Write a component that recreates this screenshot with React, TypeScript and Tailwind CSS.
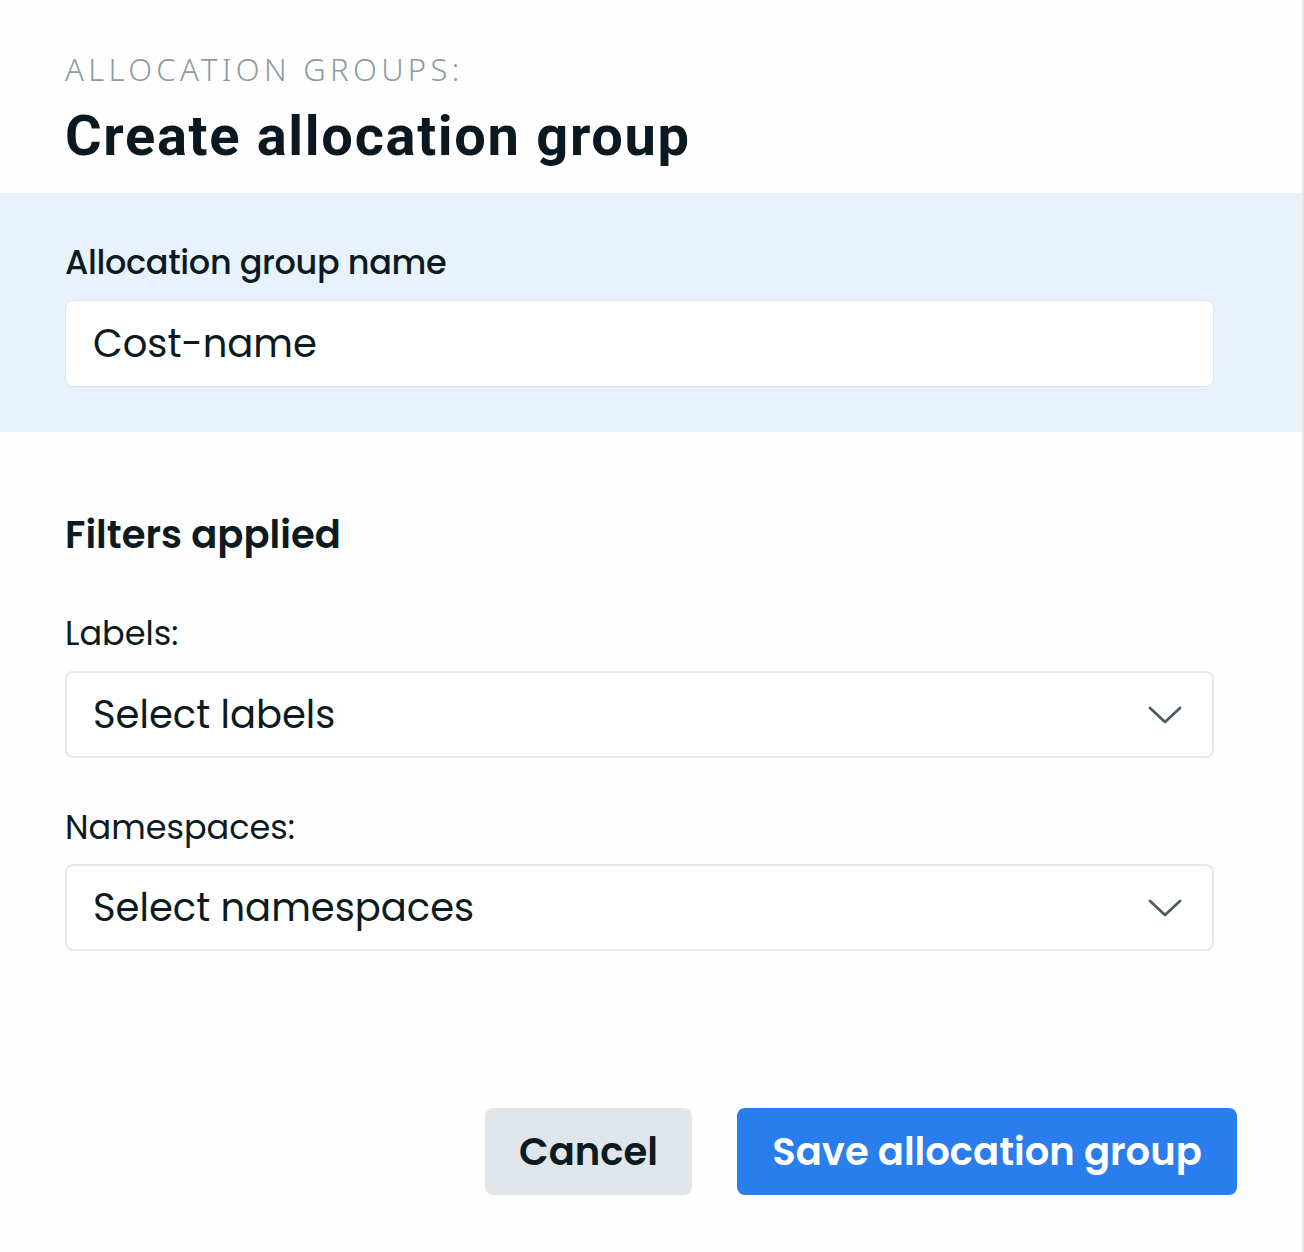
import React from "react";

const Chevron = () => (
  <svg width="34" height="20" viewBox="0 0 34 20" fill="none">
    <path d="M2 3 L17 17 L32 3" stroke="#4b5d63" strokeWidth="2.8" strokeLinecap="round" strokeLinejoin="round" />
  </svg>
);

export default function App() {
  const body = { fontFamily: "Poppins, 'Noto Sans', Inter, sans-serif" };
  return (
    <div className="w-[1304px] min-h-[1252px] bg-[#fefefe] border-r-[2px] border-[#e6e6e6] flex flex-col text-[#0c1a21]" style={body}>
      <div className="pl-[65px] pt-[50px] h-[193px]">
        <div className="text-[31px] leading-[38px] tracking-[0.14em] text-[#8c9ca2] font-light" style={{ fontFamily: "'Noto Sans', sans-serif" }}>
          ALLOCATION GROUPS:
        </div>
        <div className="mt-[15px] text-[56px] leading-[66px] font-bold tracking-[0.03em] text-[#0b1820]" style={{ fontFamily: "Roboto, 'Noto Sans', sans-serif" }}>
          Create allocation group
        </div>
      </div>
      <div className="bg-[#e8f2fd] h-[239px] pl-[65px] pr-[88px] pt-[50px]">
        <div className="text-[33.5px] leading-[40px] font-medium tracking-[-0.01em]">Allocation group name</div>
        <div className="mt-[17px] h-[87px] bg-white rounded-[8px] border border-[#dfe6ea] flex items-center pl-[27px] text-[38.5px]">
          Cost-name
        </div>
      </div>
      <div className="pl-[65px] pr-[88px] pt-[80px]">
        <div className="text-[38.5px] leading-[46px] font-semibold">Filters applied</div>
        <div className="mt-[56px] text-[33.5px] leading-[40px]">Labels:</div>
        <div className="mt-[17px] h-[87px] bg-white rounded-[8px] border-[2px] border-[#e3e9ec] flex items-center justify-between pl-[26px] pr-[30px] text-[38.5px]">
          <span>Select labels</span>
          <Chevron />
        </div>
        <div className="mt-[50px] text-[33.5px] leading-[40px]">Namespaces:</div>
        <div className="mt-[16px] h-[87px] bg-white rounded-[8px] border-[2px] border-[#e3e9ec] flex items-center justify-between pl-[26px] pr-[30px] text-[38.5px]">
          <span>Select namespaces</span>
          <Chevron />
        </div>
      </div>
      <div className="flex justify-end gap-[45px] pr-[65px] mt-[157px]">
        <button className="w-[207px] h-[87px] rounded-[8px] bg-[#dfe5e8] text-[38.5px] font-semibold text-[#0c1a21]">Cancel</button>
        <button className="w-[500px] h-[87px] rounded-[8px] bg-[#2a7ded] text-[38.5px] font-semibold text-white">Save allocation group</button>
      </div>
    </div>
  );
}
